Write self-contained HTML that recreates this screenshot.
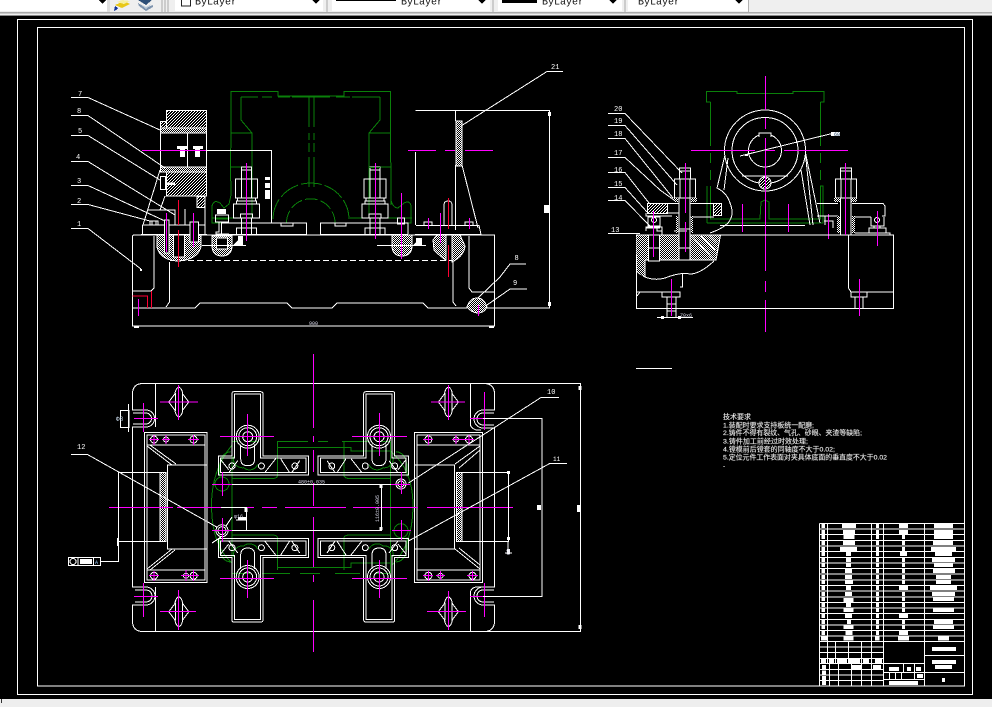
<!DOCTYPE html>
<html>
<head>
<meta charset="utf-8">
<style>
html,body{margin:0;padding:0;background:#000;width:992px;height:707px;overflow:hidden}
svg{display:block}
.w{fill:none;stroke:#fff;stroke-width:1}
.g{fill:none;stroke:#0a800a;stroke-width:1}
.m{fill:none;stroke:#f0f;stroke-width:1}
.r{fill:none;stroke:#ff0033;stroke-width:1}
text{font-family:"Liberation Mono","Noto Sans CJK SC",monospace;fill:#fff}
.l{font-size:7px}
.cn{font-family:"Liberation Sans","Noto Sans CJK SC",sans-serif;font-size:6.6px;fill:#fff;stroke:#bbb;stroke-width:.2}
.tb{font-family:"Liberation Mono",monospace;font-size:10px;fill:#111}
.tiny{font-size:5px;fill:#dde}
</style>
</head>
<body>
<svg width="992" height="707" viewBox="0 0 992 707" xmlns="http://www.w3.org/2000/svg" shape-rendering="crispEdges">
<defs>
<pattern id="x" width="2" height="2" patternUnits="userSpaceOnUse"><rect width="2" height="2" fill="#000"/><rect width="1" height="1" fill="#fff"/><rect x="1" y="1" width="1" height="1" fill="#fff"/></pattern>
<pattern id="h" width="3" height="3" patternUnits="userSpaceOnUse"><rect width="3" height="3" fill="#000"/><rect x="2" y="0" width="1" height="1" fill="#fff"/><rect x="1" y="1" width="1" height="1" fill="#fff"/><rect x="0" y="2" width="1" height="1" fill="#fff"/></pattern>

<g id="tc">
 <path class="g" d="M-14 20A9 9 0 0 0 -4 31A9 9 0 0 0 10 28M-17 15Q-30 16 -28 40"/>
 <path class="w" d="M-15.7 19.3V-43Q-15.7 -45 -14 -45H13Q15.3 -45 15.3 -43V19.3H60.9V38.3H-29.3V19.3Z"/>
 <path class="w" d="M-13 21.5V-42.5H13V21.5H58.3V36H-27V21.5Z"/>
 <circle class="w" cx="0" cy="0" r="11.5"/><circle class="w" cx="0" cy="0" r="9"/><circle class="w" cx="0" cy="0" r="5"/>
 <path class="w" d="M-7 8V22Q-7 29 0 29Q7 29 7 22V8"/>
 <circle class="w" cx="-15.7" cy="29.3" r="3"/><circle class="w" cx="13.7" cy="29.3" r="3"/><circle class="w" cx="47.2" cy="29.3" r="3"/>
 <path class="w" d="M-27 23L-19 33M-19 36L-10 24M17 36L28 22M33 22L42 36M52 24L44 36"/>
</g>

<g id="bolt">
 <rect class="w" x="-5" y="167" width="10" height="12"/><path class="w" d="M-5 170H5"/>
 <rect class="w" x="-11" y="179" width="22" height="19"/><path class="w" d="M-5 179V198M5 179V198"/>
 <rect class="w" x="-9" y="198" width="18" height="3"/>
 <rect class="w" x="-10" y="201" width="20" height="3"/>
 <rect class="w" x="-13" y="204" width="26" height="14"/>
 <rect class="w" x="-6" y="214" width="12" height="4" />
 <path class="w" d="M-5 218V228M5 218V228M-6 228H6M-10 234V228H10V234M-5 228V234M5 228V234"/>
</g>

<g id="dm">
 <path class="w" d="M0 -15Q3 -14 4 -8L10 0L4 8Q3 14 0 15Q-3 14 -4 8L-10 0L-4 -8Q-3 -14 0 -15ZM-3.5 -9V9M3.5 -9V9"/>
</g>
</defs>

<rect x="0" y="0" width="992" height="707" fill="#000"/>

<!-- toolbar -->
<rect x="0" y="0" width="992" height="16" fill="#efefef"/>
<rect x="0" y="12" width="992" height="1" fill="#a9a9a9"/>
<rect x="0" y="13" width="992" height="1" fill="#c9c9c9"/>
<rect x="0" y="15" width="992" height="1" fill="#8a8a8a"/>
<rect x="0" y="0" width="107" height="11" fill="#fff"/>
<rect x="107" y="0" width="3" height="12" fill="#ddd"/>
<rect x="175" y="0" width="148" height="11" fill="#fff"/>
<rect x="332" y="0" width="158" height="11" fill="#fff"/>
<rect x="498" y="0" width="124" height="11" fill="#fff"/>
<rect x="628" y="0" width="120" height="11" fill="#fff"/>
<path d="M162 0V12M165 0V12M168 0V12M327 0V12M493 0V12M625 0V12" stroke="#a8a8a8" stroke-width="1" fill="none"/>
<path d="M748.5 0V12" stroke="#b0b0b0" fill="none"/>
<path d="M99 0H106L102.5 4ZM312.5 0H319.5L316 4ZM478.5 0H485.5L482 4ZM609.5 0H616.5L613 4ZM735.5 0H742.5L739 4Z" fill="#000"/>
<path d="M115 5L124 1L130 4L122 8Z" fill="#e8c818"/><path d="M122 0L130 1L124 4L117 2Z" fill="#f6ef9e"/><path d="M115 6L118 8L116 10L114 11Z" fill="#12349a"/>
<path d="M138 3L146 8L153 5L153 7L146 11L139 6Z" fill="#7d93ae"/><path d="M138 0H152L146 5Z" fill="#2d4f78"/><path d="M140 4L146 7L152 4L146 9Z" fill="#b8c8d8"/>
<rect x="181.5" y="-3" width="9" height="9" fill="#fff" stroke="#222"/>
<text class="tb" x="195" y="4.5">ByLayer</text>
<rect x="336" y="0" width="60" height="1" fill="#000"/>
<text class="tb" x="401" y="4.5">ByLayer</text>
<rect x="502" y="0" width="35" height="3" fill="#000"/>
<text class="tb" x="542" y="4.5">ByLayer</text>
<text class="tb" x="638" y="4.5">ByLayer</text>

<!-- frames -->
<rect class="w" x="17.5" y="19.5" width="955" height="675"/>
<rect class="w" x="37.5" y="27.5" width="927" height="658.5"/>

<!-- status bar -->
<rect x="0" y="699" width="992" height="8" fill="#eee"/>
<rect x="1" y="699" width="1" height="4" fill="#333"/>

<!-- ============ FRONT VIEW ============ -->
<!-- green -->
<path class="g" d="M231 118V91.5H278V96H344V91.5H390.5V118M231 118L230.5 181M390.5 118L391 205M241 97V120L252 133V179M380 97V120L369 133V167M231 133H252M369 133H391M231 167H241M369 167H391M231 181V195L229 204L224 208L220 203Q214 199 212 206V223H272M350 218H412M252 179V218M212 218H248M391 200Q393 208 398 208L404 203Q410 200 411 206V223H400M369 167V218M241 97H258M262 97H272M278 97H290M292 97H330M336 97H350M352 97H380M309 97V127M309 133V140M309 143V152M309 157V187M314 97V127M314 133V140M314 143V152M314 157V187"/>
<path class="g" d="M273 219A38 36 0 0 1 349 219" stroke-dasharray="21 3"/>
<path class="g" d="M286.5 223A24 24 0 0 1 335 223" stroke-dasharray="13 3"/>

<!-- base -->
<path class="w" d="M132.5 326V237Q132.5 235 134 235H494.5V326H132.5ZM132.5 308H195L200 303H287L292 308H332L337 303H423L428 308H467M487 308H550M154 236V288L151 291H132.5M469 236V288L472 292H494.5"/>
<path class="w" d="M170 260.5H453" stroke-dasharray="6 3"/>
<path class="w" d="M169.5 262V302L166 307M453 262V302L456 306"/>
<rect x="134" y="326" width="5" height="2" fill="#fff"/><rect x="489" y="326" width="5" height="2" fill="#fff"/>
<path class="r" d="M132.5 296H147.5V308M151.5 291V308"/>
<path class="m" d="M138.5 299V316"/>

<!-- left assembly -->
<rect x="166.5" y="110.5" width="40" height="20" fill="url(#h)" stroke="#fff"/>
<rect x="160.5" y="121.5" width="6" height="10" fill="url(#h)" stroke="#fff"/>
<rect x="160.5" y="128" width="46" height="5" fill="url(#x)" stroke="#fff"/>
<path class="w" d="M160.5 133V167M206.5 130V196M187.5 133V167"/>
<rect x="160.5" y="167" width="46" height="5" fill="url(#x)" stroke="#fff"/>
<rect x="166.5" y="172" width="40" height="24" fill="url(#h)" stroke="#fff"/>
<rect x="160.5" y="176.5" width="5" height="13" fill="#000" stroke="#fff"/>
<path class="w" d="M160 170L143 225M166 183H175M165 196L160 210H148M148 210H175V225M185 209V225M205 196V234M142.5 225H205M142.5 225V234M141 234.5H207"/>
<rect x="167" y="183" width="8" height="2" fill="#fff"/>
<rect x="197" y="196.5" width="8" height="11" fill="url(#h)" stroke="#fff"/>
<rect x="177" y="146" width="10" height="3" fill="#fff"/><rect x="180" y="146" width="5" height="11" fill="#fff"/>
<rect x="193" y="146" width="10" height="3" fill="#fff"/><rect x="195" y="146" width="5" height="11" fill="#fff"/>
<path class="w" d="M206 150.5H271.5V223"/>
<rect x="265" y="177" width="5" height="3" fill="#fff"/><rect x="265" y="183" width="5" height="5" fill="#fff"/><rect x="265" y="190" width="5" height="9" fill="#fff"/>
<path class="w" d="M150 225V221H158V225M152 221V225M156 221V225"/>
<path d="M157 235V247Q160 260 178 261Q197 260 201 247V235Z" fill="url(#x)" stroke="#fff"/>
<rect x="173.5" y="235" width="11" height="22" fill="#000" stroke="#fff"/>
<rect x="164.5" y="220" width="4.5" height="33" fill="#000" stroke="#fff"/>
<rect x="190" y="222" width="8.5" height="20" fill="#000" stroke="#fff"/>
<path class="r" d="M178.5 200V225M178.5 230V267"/>
<path class="m" d="M142 150.5H206M166.5 213V252M193.5 213V247"/>

<!-- left clamp -->
<rect x="217" y="209" width="9" height="5" fill="#fff"/>
<rect class="w" x="215.5" y="215" width="13" height="7"/>
<path class="g" d="M216 219H228"/>
<path class="w" d="M219 222V232H216V236M229 234H216"/>
<path d="M212 236V247Q213 256 222 256Q231 256 232 247V236Z" fill="url(#x)" stroke="#fff"/>
<rect x="216.5" y="238" width="11" height="11" fill="#000" stroke="#fff"/>
<path class="w" d="M202 245.5H246"/>
<path d="M233 245L238 240V236H243V245Z" fill="#fff"/>

<!-- plates -->
<path class="w" d="M221.5 234V223H306.5V234M320.5 234V223H408V234M221 234.5H307M320 234.5H408M281 223V226H293V223M335 223V226H346V223"/>
<use href="#bolt" x="246.5"/><use href="#bolt" x="375"/>
<path class="g" d="M369 167.5H380"/>
<path class="m" d="M246.5 163V241M375.5 163V239M401.5 193V259"/>
<rect class="w" x="397.5" y="218" width="7" height="6"/>
<path d="M392 235V247Q393 256 402 256Q411 256 412 247V235Z" fill="url(#x)" stroke="#fff"/>
<path class="m" d="M401.5 193V259"/>
<path class="w" d="M377 245.5H426"/>
<path d="M413 245L416 242V238H422V245Z" fill="#fff"/>

<!-- right assembly -->
<path class="w" d="M415.5 152V225M415.5 110.5H549.5V308M455.5 110.5V121M462 165L478 228M455.5 165V230M416 225.5H479L481 234.5H415"/>
<rect x="456" y="121" width="6" height="45" fill="url(#x)" stroke="#fff"/>
<path class="m" d="M408 150.5H436M445 150.5H455M465 150.5H493"/>
<rect x="544" y="205" width="5" height="8" fill="#fff"/>
<rect x="548" y="112" width="3" height="4" fill="#fff"/><rect x="548" y="302" width="3" height="4" fill="#fff"/>
<path class="w" d="M424 225V222H432V225M465 225V222H473V225M444 225V205Q444 201 448 201Q452 201 452 205V225"/>
<path class="m" d="M428.5 218V229M469.5 218V229"/>
<path d="M433 240L437 235H446V260Q442 258 434 250ZM452 235H460L465 246Q464 256 452 262Z" fill="url(#x)" stroke="#fff"/>
<path class="r" d="M448.5 198V229M448.5 245V277"/>
<path class="m" d="M440.5 213V243"/>

<!-- bottom-right circle -->
<path d="M467 307Q470 298 477 298Q484 298 487 307Q484 313 478 313Q472 313 467 307Z" fill="url(#x)" stroke="#fff"/>
<path class="m" d="M478.5 305V316"/>
<path class="w" d="M478 298L500 277L510 264H526M487 305L500 296L510 289H527M461 126L547 71.5H563"/>
<text class="l" x="514.5" y="260">8</text><text class="l" x="513" y="285" fill="#cdf">9</text><text class="l" x="551" y="69">21</text>
<text class="tiny" x="309" y="325">900</text>

<!-- left leaders -->
<path class="w" d="M71 97.5H88L160 130M71 115.5H88L165 168M71 135.5H88L160 180M71 161.5H88L175 215M71 185.5H88L165 221M71 204.5H88L150 221M71 228.5H88L141 269"/>
<rect x="140" y="269" width="2" height="2" fill="#fff"/>
<text class="l" x="78" y="96" >7</text><text class="l" x="77" y="113">8</text><text class="l" x="78" y="133">5</text><text class="l" x="76" y="159">4</text><text class="l" x="77" y="183">3</text><text class="l" x="77" y="203">2</text><text class="l" x="77" y="226">1</text>

<!-- ============ SIDE VIEW ============ -->
<path class="g" d="M710.5 102H706.5V91.5H737V93.5H793V91.5H824V102H820.5"/>
<path class="g" d="M710.5 102V146M820.5 102V146M710.5 153V163M820.5 153V163M710.5 170V180M820.5 170V180M710.5 186V219H760L761 202L765 200L769 202L769 219H820.5V186M707 223V186M707 223H823V186H820"/>
<!-- circles -->
<circle class="w" cx="765" cy="150.5" r="40.5"/>
<circle class="w" cx="765" cy="150.5" r="33"/>
<circle class="w" cx="765" cy="150.5" r="16.5"/>
<path d="M759 137V133H771V137" fill="#000" stroke="#fff"/>
<path class="w" d="M742 176H788"/>
<circle cx="765" cy="183" r="6" fill="url(#h)" stroke="#fff"/>
<path class="w" d="M725 155L717 188Q727 193 730 203Q735 215 728 223Q722 229 710 233M728 158L724 190M805.5 155L813 225M801 170L810 225M805.5 153L820 223M720 225.5H805M819 216H825V225M824 221H833V228"/>
<path class="m" d="M691 150.5H755M766 150.5H775M784 150.5H848M765.5 76V110M765.5 118V129M765.5 138V271M765.5 281V292M765.5 300V332M742.5 204V232M788.5 204V232M828.5 214V239"/>
<path class="w" d="M740 156L830 134H840"/>
<rect x="745" y="154" width="3" height="2" fill="#fff"/>
<rect x="831" y="132" width="9" height="4" fill="#fff"/>
<text class="tiny" x="834" y="136" style="fill:#246">60</text>

<!-- side base -->
<path class="w" d="M636.5 235H893.5V308.5H636.5Z"/>
<path d="M637 235H720.5L716 260H645V277L637 272Z" fill="url(#x)" stroke="#fff"/>
<path d="M636.5 236H645V277L637 272Z" fill="url(#x)"/>
<path d="M692 236L712 258M701 236L715 250M710 236L717 243" stroke="#fff" fill="none"/>
<path class="w" d="M645 261V277Q655 281 665 278Q680 272 690 274Q700 274 714 261M636.5 292H640L637 296M640 292H680M682.5 273V287H680"/>
<path class="w" d="M848.5 235V288L851 292H893M851 292V297H867V292M855 297V308M863 297V308"/>
<path class="w" d="M662 292H680V297H662ZM667 297V318M676 297V318M667 304H676M667 311H676M657 317.5H693"/>
<rect x="661" y="316" width="3" height="3" fill="#fff"/><rect x="678" y="316" width="3" height="3" fill="#fff"/>
<text class="tiny" x="680" y="317">Z0x6</text>
<path class="m" d="M671.5 279V316M859.5 279V316"/>

<!-- side clamps left -->
<rect x="648.5" y="235" width="11" height="26" fill="#000" stroke="#fff"/>
<path class="w" d="M648 248H660"/>
<rect x="679" y="198" width="11" height="62" fill="#000" stroke="#fff"/>
<path class="w" d="M679 229H690M679 248H690"/>
<rect class="w" x="679.5" y="168" width="11" height="11"/>
<path class="w" d="M679 171H691"/>
<rect class="w" x="674.5" y="179" width="21" height="19"/>
<path class="w" d="M680 179V198M690 179V198"/>
<rect x="674" y="198" width="4" height="4" fill="url(#x)"/><rect x="691" y="198" width="6" height="4" fill="url(#x)"/>
<rect x="647.5" y="203.5" width="20" height="10" fill="url(#h)" stroke="#fff"/>
<path class="w" d="M667 203.5H679M690 203.5H713M667 213H679M690 217H714M646 213V216H660M648 216H672M714 216V203"/>
<rect x="713.5" y="203.5" width="8" height="12" fill="url(#h)" stroke="#fff"/>
<rect class="w" x="648" y="217" width="12" height="9"/>
<circle class="w" cx="654" cy="220" r="2.5"/>
<path class="w" d="M646 231V227H662V235M646 228H660M657 228V231H662M674 231H687"/>
<rect x="676" y="216" width="2" height="17" fill="url(#x)"/><rect x="691" y="216" width="2" height="17" fill="url(#x)"/>
<path class="m" d="M685.5 163V213M685.5 222V252M653.5 211V257"/>

<!-- side clamps right -->
<rect class="w" x="840.5" y="168" width="11" height="11"/>
<path class="w" d="M840 171H852"/>
<rect class="w" x="835.5" y="179" width="21" height="19"/>
<path class="w" d="M841 179V198M851 179V198"/>
<rect x="834" y="198" width="6" height="4" fill="url(#x)"/><rect x="851" y="198" width="6" height="4" fill="url(#x)"/>
<path class="w" d="M840.5 198V235M851 198V235M817 203.5H838M852 203.5H883L885 206V216H882M817 216H838M852 217H871M871 217V226H884V217M874 226V228H880V226M869 233V228H886V233M855 233H890V235"/>
<circle class="w" cx="877" cy="220" r="2.5"/>
<rect x="837" y="216" width="3" height="17" fill="url(#x)"/><rect x="852" y="216" width="3" height="17" fill="url(#x)"/>
<path class="m" d="M845.5 163V235M877.5 211V246"/>

<!-- side leaders -->
<path class="w" d="M608 113.5H625L682 173M608 125.5H625L677 185M608 138.5H625L673 198M608 157.5H625L660 190L674 200M608 172.5H625L649 203M608 187.5H625L647 212M608 200.5H625L650 226M608 233.5H640"/>
<text class="l" x="614" y="111">20</text><text class="l" x="614" y="123">19</text><text class="l" x="614" y="136">18</text><text class="l" x="614" y="155">17</text><text class="l" x="614" y="172">16</text><text class="l" x="614" y="186">15</text><text class="l" x="614" y="200">14</text><text class="l" x="611" y="232">13</text>

<path class="w" d="M636 368.5H672"/>

<!-- ============ PLAN VIEW ============ -->
<!-- green -->
<path class="g" d="M232 445Q211.5 470 211.5 505Q211.5 545 232 563M390.5 451Q413 470 413 505Q413 545 392 565M232 441.5V562M390.5 441.5V573M232 441.5H238M249 441.5H258M277 441.5H308M318 441.5H328M342 441.5H368M377 441.5H390.5M277.5 441.5V475Q277.5 478.5 272 478.5H232M344 441.5V475Q344 478.5 350 478.5H390M277.5 447.5H351V451H390M277.5 538V570M277.5 538Q277.5 535 272 535H232M344 570V538Q344 535 350 535H390M277.5 567.5H351V563H390M232 573.5H250M262 573.5H290M300 573.5H320M335 573.5H360M375 573.5H390"/>
<circle class="g" cx="222" cy="484" r="7"/><circle class="g" cx="401" cy="530.7" r="7"/>

<!-- plate -->
<path class="w" d="M143 383.5Q132.5 383.5 132.5 394V410H146A8.5 8.5 0 0 1 146 427H132.5V587H146A9 9 0 0 1 146 605H132.5V621Q132.5 631.5 143 631.5H580.5V383.5H143Z"/>
<path class="w" d="M133 413H146A5.5 5.5 0 0 1 146 424H133M135 590H146A6 6 0 0 1 146 602H135M155.5 383.5V427M155.5 587V631.5"/>
<path class="w" d="M470.5 383.5V425Q471 428 476 430H481M470.5 631.5V592Q471 588 476 587H481"/>
<path class="w" d="M484 383.5Q494.5 383.5 494.5 394V410H483A9 9 0 0 0 483 428H494.5V587H483A9 9 0 0 0 483 605H494.5V621Q494.5 631.5 484 631.5"/>
<path class="w" d="M494 413H483A6 6 0 0 0 483 425H494M494 590H483A6 6 0 0 0 483 602H494"/>
<rect x="578.5" y="386" width="3" height="4" fill="#fff"/><rect x="578.5" y="625" width="3" height="4" fill="#fff"/><rect x="577" y="505" width="4" height="7" fill="#fff"/>

<!-- diamonds -->
<use href="#dm" x="178.8" y="402"/><use href="#dm" x="448.4" y="402"/><use href="#dm" x="178.8" y="611.7"/><use href="#dm" x="448.4" y="611.7"/>
<path class="m" d="M160 402H198M178.5 385V420M431 402H465M448.5 385V420M160 611.5H196M178.5 590V630M427 611.5H466M448.5 591V630"/>

<!-- corner crosses -->
<path class="m" d="M134 418.5H158M143.5 403V432M470 418.5H495M484.5 392V430M134 596.5H158M143.5 583V617M470 596.5H495M484.5 583V617"/>

<!-- datum -->
<rect class="w" x="120.5" y="410.5" width="8.5" height="17"/>
<path class="w" d="M128.5 404V432"/>
<text class="l" x="116" y="421" style="font-size:6px;fill:#cde">Φ8</text>

<!-- support blocks -->
<rect class="w" x="144.5" y="432.5" width="62.5" height="150"/>
<rect class="w" x="147" y="435" width="58" height="145"/>
<path class="w" d="M147 445H205M147 570H205M207 465H167.5V549H207M147 446L172 465M150 445L176 464M147 569L172 549M150 570L175 550"/>
<rect x="160" y="472.5" width="6" height="69" fill="url(#x)" stroke="#fff"/>
<rect class="w" x="414.7" y="432.5" width="67.8" height="150"/>
<rect class="w" x="417" y="435" width="63" height="145"/>
<path class="w" d="M417 445H480M417 570H480M415 465H454.6V549H415M480 446L455 464M480 450L459 468M480 569L455 549M480 565L459 548"/>
<rect x="456.7" y="472.5" width="5.5" height="69" fill="url(#x)" stroke="#fff"/>
<g class="w">
<circle cx="154" cy="439.5" r="3.5"/><circle cx="166" cy="439.5" r="2.5"/><circle cx="193.6" cy="439.5" r="3.5"/>
<circle cx="154" cy="575.7" r="3.5"/><circle cx="186" cy="575.7" r="2.5"/><circle cx="193.6" cy="575.7" r="3.5"/>
<circle cx="428.4" cy="439.5" r="3.5"/><circle cx="456" cy="439.5" r="2.5"/><circle cx="469" cy="439.5" r="3.5"/>
<circle cx="428.4" cy="575.7" r="3.5"/><circle cx="440.5" cy="575.7" r="2.5"/><circle cx="472.5" cy="575.7" r="3.5"/>
</g>
<path class="m" d="M149 439.5H159M154 435V445M162 439.5H170M166 435V444M188 439.5H199M193.5 435V445M149 575.5H159M154 571V581M181 575.5H199M186 570V581M193.5 570V581M423 439.5H433M428.5 435V445M452 439.5H474M456 435V444M469 435V445M423 575.5H433M428.5 571V581M436 575.5H445M440.5 571V580M467 575.5H478M472.5 571V581"/>

<!-- T clamps -->
<use href="#tc" transform="translate(247.7,436.7)"/>
<use href="#tc" transform="translate(379,436.7) scale(-1,1)"/>
<use href="#tc" transform="translate(247.7,577) scale(1,-1)"/>
<use href="#tc" transform="translate(379,577) scale(-1,-1)"/>
<path class="m" d="M220 436.5H274M247.5 414V456M352 436.5H407M379.5 413V456M220 578.5H274M247.5 560V598M352 578.5H407M379.5 560V598"/>

<!-- center lines -->
<path class="m" d="M313.5 354V428M313.5 436V442M313.5 450V472M313.5 483V506M313.5 517V567M313.5 575V582M313.5 600V652"/>
<path class="m" d="M109 507.5H173M177 507.5H254M262 507.5H277M285 507.5H346M353 507.5H418M427 507.5H513"/>

<!-- dims -->
<path class="w" d="M228.7 484.5H408M228.7 530.5H382M381.5 484.5V530.5M220.8 507.5H246.5V530M236 520H246M483 418.5H542V596.5H483M462 472.5H508.5V541.5H462M508 541V553M505 553H512M118.5 472.5H160M118.5 541.5H160M118.5 472.5V561.5H100.6"/>
<rect x="379.5" y="485" width="3" height="3" fill="#fff"/><rect x="379.5" y="527" width="3" height="3" fill="#fff"/>
<rect x="244.5" y="508" width="3" height="4" fill="#fff"/><rect x="238" y="517" width="8" height="3" fill="#fff"/>
<rect x="507" y="471" width="3" height="3" fill="#fff"/><rect x="507" y="537" width="3" height="3" fill="#fff"/>
<rect x="507" y="549" width="3" height="5" fill="#fff"/>
<rect x="537" y="505" width="4" height="5" fill="#fff"/>
<rect x="117" y="538" width="2" height="8" fill="#fff"/>
<circle class="w" cx="401" cy="484" r="5"/><circle class="w" cx="401" cy="484" r="3"/>
<circle class="w" cx="222" cy="530.7" r="6"/><circle class="w" cx="222" cy="530.7" r="4"/>
<path class="w" d="M226 526L232 517M212 543L221 537"/>
<path class="m" d="M401.5 472V494M391 484.5H410M222.5 518V542M212 530.5H232M222.5 472V496M212 484.5H232M401.5 520V540M392 530.5H411"/>
<text class="tiny" x="298" y="483.5">480±0.035</text>
<text class="tiny" x="234" y="518">φ16</text>
<text class="tiny" transform="translate(379,522) rotate(-90)">116±0.005</text>
<text class="tiny" transform="translate(510,555) rotate(-90)">60</text>

<!-- tolerance box -->
<rect class="w" x="68.5" y="557.5" width="32" height="8"/>
<path class="w" d="M78 557.5V565.5M93.5 557.5V565.5"/>
<circle class="w" cx="73" cy="561.5" r="3"/>
<rect x="80" y="559" width="12" height="5" fill="#fff"/>
<text class="tiny" x="95" y="564" style="font-size:5px;fill:#9cf">A</text>

<!-- plan leaders -->
<path class="w" d="M71 454.5H87.5L216.7 527M559 397.5H541L408.5 483M567 463.5H549.7L408.5 541"/>
<text class="l" x="77" y="449">12</text><text class="l" x="547" y="394">10</text><text class="l" x="553" y="461" style="font-size:6px">11</text>

<!-- tech notes -->
<text class="cn" x="723" y="419" textLength="28" lengthAdjust="spacingAndGlyphs">技术要求</text>
<text class="cn" x="723" y="427.5" textLength="91" lengthAdjust="spacingAndGlyphs">1.装配时要求支持板统一配磨;</text>
<text class="cn" x="723" y="435" textLength="139" lengthAdjust="spacingAndGlyphs">2.铸件不得有裂纹、气孔、砂眼、夹渣等缺陷;</text>
<text class="cn" x="723" y="443.5" textLength="85" lengthAdjust="spacingAndGlyphs">3.铸件加工前经过时效处理;</text>
<text class="cn" x="723" y="451.5" textLength="112" lengthAdjust="spacingAndGlyphs">4.镗模前后镗套的同轴度不大于0.02;</text>
<text class="cn" x="723" y="459.5" textLength="164" lengthAdjust="spacingAndGlyphs">5.定位元件工作表面对夹具体底面的垂直度不大于0.02</text>
<text class="cn" x="723" y="468">-</text>

<!-- title block grid -->
<path class="w" d="M819.5 523.5H964M819.5 523.5V686M827.5 523.5V641.5M871.5 523.5V641.5M883.5 523.5V686M924.5 523.5V686"/>
<path class="w" d="M819.5 529H964M819.5 534.5H964M819.5 540.5H964M819.5 546H964M819.5 551.5H964M819.5 557.5H964M819.5 563H964M819.5 568.5H964M819.5 574H964M819.5 580H964M819.5 585.5H964M819.5 591H964M819.5 597H964M819.5 602.5H964M819.5 608H964M819.5 613.5H964M819.5 619.5H964M819.5 625H964M819.5 630.5H964M819.5 636H964M819.5 641.5H964"/>
<path class="w" d="M819.5 647H883.5M819.5 652.5H883.5M819.5 658.5H883.5M819.5 663.5H883.5M819.5 669.5H883.5M819.5 675H883.5M819.5 680.5H883.5M827.5 641.5V663M835.5 641.5V663M848.5 641.5V663M861.5 641.5V663M871.5 641.5V663M829.5 663V686M838.5 663V686M851.5 663V686M861.5 663V686M871.5 663V686M883.5 663.5H924.5M883.5 672.5H964M883.5 679.5H924.5M924.5 655.5H964M903.5 663.5V672.5M914.5 663.5V672.5M889.5 672.5V679.5M895.5 672.5V679.5M901.5 672.5V679.5M914.5 672.5V679.5"/>
<!-- blobs -->
<path fill="none" stroke="#fff" stroke-width="4.2" shape-rendering="crispEdges" d="
M821.5 526h3.5M821.5 532h3.5M821.5 537h3.5M821.5 543h3.5M821.5 549h3.5M821.5 554h3.5M821.5 560h3.5M821.5 565h3.5M821.5 571h3.5M821.5 577h3.5M821.5 582h3.5M821.5 588h3.5M821.5 594h3.5M821.5 599h3.5M821.5 605h3.5M821.5 610h3.5M821.5 616h3.5M821.5 622h3.5M821.5 627h3.5M821.5 633h3.5M821 638.5h6
M842 526h14M843 532h12M843.5 537h11M843 543h12M840 549h17M846 554h5M846 560h5M846 565h5M845 571h7M845 577h7M845 582h8M846 588h5M845 594h7M843.5 600h10M846 605h5M843.5 610h10M845 616h7M847 622h4M843.5 627h10M845.5 633h7M843.5 638.5h10
M876 526h3M876 532h3M876 537h3M876 543h3M876 549h3M876 554h3M876 560h3M876 565h3M876 571h3M876 577h3M876 582h3M876 588h3M876 594h3M876 599h3M876 605h3M876 610h3M876 616h3M876 622h3M876 627h3M876 633h3M875 638.5h4.5
M899 526h9M899 532h9M902 537h3M902 543h3M902 549h3M900 554h7M902 560h3M902 565h3M902 571h3M902 577h3M902 582h3M899 588h9M902 594h3M902 599h3M902 605h3M902 610h3M899 616h9M902 622h3M902 627h3M899 633h9M898 638.5h11
M934 526h19M934 532h19M934 537h19M933 543h20M931 549h25M935 554h17M932 560h23M934 565h19M933 571h22M936 577h15M936 582h15M930 588h27M932 594h23M933 599h21M933 610h21M934 622h19M933 627h21M938 638.5h11
M821 661h5M829 661h5M837 661h10M849 661h11M863 661h6M875 661h7
M822 667h4M851 667h10M873 667h8M822 672.5h4M822 678h4M822 683h4
M889 669h10M907 669h4M916 669h5M917 676h6M889 683h29"/>
<path fill="none" stroke="#fff" stroke-width="4" d="M932 649h24M932 662h24M935 667h17M942 680h3"/>
</svg>
</body>
</html>
